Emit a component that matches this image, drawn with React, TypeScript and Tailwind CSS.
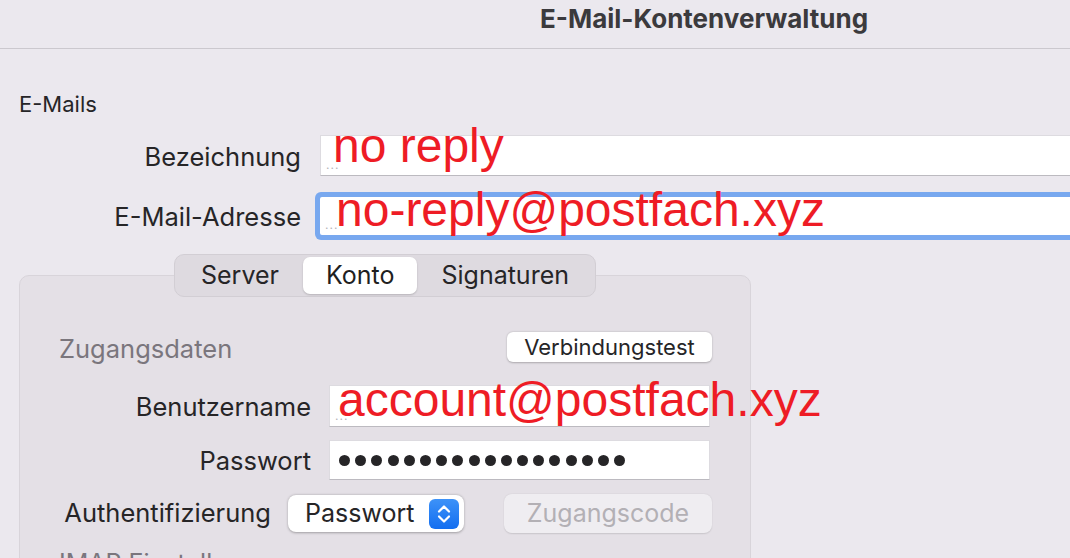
import React from 'react';

const red = "absolute whitespace-nowrap font-['Liberation_Sans',Arial,sans-serif] text-[48px] leading-[48px] text-[#ee1c25]";

function Dots() {
  // leftover placeholder dots in the fields
  return (
    <span className="absolute left-[5px] bottom-[4px] text-[12px] leading-none tracking-[1px] text-[#b5b3b8]">...</span>
  );
}

function Stepper() {
  return (
    <svg width="30" height="30" viewBox="0 0 30 30">
      <defs>
        <linearGradient id="stp" x1="0" y1="0" x2="0" y2="1">
          <stop offset="0" stopColor="#3d92f8" />
          <stop offset="1" stopColor="#136ef0" />
        </linearGradient>
      </defs>
      <rect x="0" y="0" width="30" height="30" rx="6" fill="url(#stp)" />
      <path d="M10 12.5 L15 7.5 L20 12.5" fill="none" stroke="#fff" strokeWidth="2.2" strokeLinecap="round" strokeLinejoin="round" />
      <path d="M10 17.5 L15 22.5 L20 17.5" fill="none" stroke="#fff" strokeWidth="2.2" strokeLinecap="round" strokeLinejoin="round" />
    </svg>
  );
}

export default function App() {
  const tabs = ['Server', 'Konto', 'Signaturen'];

  return (
    <div className="w-[1070px] h-[558px] overflow-hidden bg-[#ebe8ee] font-['Inter',sans-serif] text-[#262527]">
      <div className="h-[49px] border-b border-[#cbc8ce] pt-[4px]">
        <h1 className="pl-[540px] text-[26px] leading-[30px] font-bold text-[#3b3a3d] whitespace-nowrap">E-Mail-Kontenverwaltung</h1>
      </div>

      <div className="px-[19px]">
        <div className="mt-[42px] text-[22px] leading-[26px]">E-Mails</div>

        <div className="mt-[18px] flex items-center h-[41px]">
          <div className="w-[282px] shrink-0 pt-[3px] text-right text-[25.5px] whitespace-nowrap">Bezeichnung</div>
          <div className="relative ml-[19px] w-[780px] h-[41px] bg-white border border-[#dddbe0] border-b-[#bcbac0] shrink-0">
            <Dots />
            <span className={red + ' left-[12px] top-[-14px]'}>no reply</span>
          </div>
        </div>

        <div className="mt-[21px] flex items-center h-[38px]">
          <div className="w-[282px] shrink-0 pt-[3px] text-right text-[25.5px] whitespace-nowrap">E-Mail-Adresse</div>
          <div className="relative ml-[19px] w-[780px] h-[38px] bg-white rounded-[2px] shadow-[0_0_0_5px_#78a8ef] shrink-0">
            <Dots />
            <span className={red + ' left-[16px] top-[-11px]'}>no-reply@postfach.xyz</span>
          </div>
        </div>

        <div className="mt-[40px] w-[732px] h-[300px] bg-[#e4e0e6] border border-[#d8d4da] rounded-[10px] pl-[39px] pr-[38px]">
          <div className="-mt-[22px] flex justify-center -ml-[39px] -mr-[38px]">
            <div className="flex h-[43px] p-[2px] bg-[#dedae0] border border-[#d2ced4] rounded-[10px] text-[25px]">
              {tabs.map((t) => (
                <div
                  key={t}
                  className={
                    t === 'Konto'
                      ? 'px-[23px] flex items-center bg-white rounded-[7px] shadow-[0_1px_2px_rgba(0,0,0,0.18)] text-[#1f1f1f]'
                      : 'px-[24px] flex items-center text-[#262527]'
                  }
                >
                  {t}
                </div>
              ))}
            </div>
          </div>

          <div className="mt-[35px] h-[30px] flex items-center justify-between">
            <div className="text-[25.5px] text-[#7a767d] pt-[5px]">Zugangsdaten</div>
            <div className="h-[30px] w-[205px] flex items-center justify-center bg-white rounded-[6px] shadow-[0_0.5px_2px_rgba(0,0,0,0.25)] text-[22px]">
              Verbindungstest
            </div>
          </div>

          <div className="mt-[23px] flex items-center h-[42px]">
            <div className="w-[252px] shrink-0 pt-[3px] text-right text-[25.5px]">Benutzername</div>
            <div className="relative ml-[18px] w-[381px] h-[42px] bg-white border border-[#dddbe0] border-b-[#bcbac0]">
              <Dots />
              <span className={red + ' left-[8px] top-[-10px]'}>account@postfach.xyz</span>
            </div>
          </div>

          <div className="mt-[13px] flex items-center h-[40px]">
            <div className="w-[252px] shrink-0 pt-[2px] text-right text-[25.5px]">Passwort</div>
            <div className="ml-[18px] w-[381px] h-[40px] bg-white border border-[#dddbe0] border-b-[#bcbac0] flex items-center pl-[9px] gap-[5.2px]">
              {Array.from({ length: 18 }).map((_, i) => (
                <span key={i} className="w-[11px] h-[11px] rounded-full bg-[#262527]" />
              ))}
            </div>
          </div>

          <div className="mt-[14px] flex items-center h-[39px]">
            <div className="w-[212px] shrink-0 text-right text-[25.5px] whitespace-nowrap">Authentifizierung</div>
            <div className="ml-[17px] w-[176px] h-[37px] bg-white rounded-[8px] shadow-[0_0.5px_2.5px_rgba(0,0,0,0.3)] flex items-center justify-between pl-[17px] pr-[5px] text-[25px]">
              <span>Passwort</span>
              <Stepper />
            </div>
            <div className="ml-[40px] w-[208px] h-[39px] bg-[#efedf1] rounded-[8px] shadow-[0_0.5px_1.5px_rgba(0,0,0,0.12)] flex items-center justify-center text-[25px] text-[#b3b0b5]">
              Zugangscode
            </div>
          </div>

          <div className="mt-[12px] text-[25px] text-[#7a767d] whitespace-nowrap">IMAP Einstellungen</div>
        </div>
      </div>
    </div>
  );
}
